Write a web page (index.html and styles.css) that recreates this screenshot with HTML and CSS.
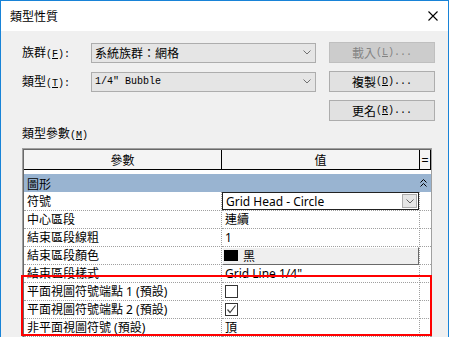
FILE: index.html
```html
<!DOCTYPE html>
<html lang="zh-Hant">
<head>
<meta charset="utf-8">
<title>類型性質</title>
<link rel="stylesheet" href="styles.css">
</head>
<body>
<div class="window">
  <div class="titlebar">
    <span class="title">類型性質</span>
    <svg class="close" width="10" height="10" viewBox="0 0 10 10"><path d="M0.5 0.5 L9.5 9.5 M9.5 0.5 L0.5 9.5" stroke="#000" stroke-width="1.1" fill="none"/></svg>
  </div>
  <div class="content">
    <div class="form">
      <div class="lbl">族群<span class="m">(<u>F</u>):</span></div>
      <div class="combo"><span>系統族群：網格</span><svg class="chev" width="8" height="5" viewBox="0 0 8 5"><path d="M0.5 0.5 L4 4 L7.5 0.5" stroke="#707070" fill="none"/></svg></div>
      <div class="btn disabled">載入<span class="m">(<u>L</u>)...</span></div>

      <div class="lbl">類型<span class="m">(<u>T</u>):</span></div>
      <div class="combo"><span class="m">1/4" Bubble</span><svg class="chev" width="8" height="5" viewBox="0 0 8 5"><path d="M0.5 0.5 L4 4 L7.5 0.5" stroke="#707070" fill="none"/></svg></div>
      <div class="btn">複製<span class="m">(<u>D</u>)...</span></div>

      <div class="btn col3">更名<span class="m">(<u>R</u>)...</span></div>
    </div>

    <div class="section">類型參數<span class="m">(<u>M</u>)</span></div>

    <div class="table">
      <div class="inner">
        <div class="hdr">
          <div>參數</div>
          <div>值</div>
          <div class="eq">=</div>
        </div>
        <div class="gap"></div>
        <div class="group">
          <span>圖形</span>
          <svg width="7" height="8" viewBox="0 0 7 8"><path d="M0.5 3.5 L3.5 0.5 L6.5 3.5 M0.5 7.5 L3.5 4.5 L6.5 7.5" stroke="#000" fill="none"/></svg>
        </div>
        <div class="row">
          <div class="k">符號</div>
          <div class="v dd">
            <div class="ddbox"><span>Grid Head - Circle</span><span class="ddbtn"><svg width="8" height="5" viewBox="0 0 8 5"><path d="M0.5 0.5 L4 4 L7.5 0.5" stroke="#606060" fill="none"/></svg></span></div>
          </div>
          <div></div>
        </div>
        <div class="row">
          <div class="k">中心區段</div>
          <div class="v">連續</div>
          <div></div>
        </div>
        <div class="row">
          <div class="k">結束區段線粗</div>
          <div class="v">1</div>
          <div></div>
        </div>
        <div class="row">
          <div class="k">結束區段顏色</div>
          <div class="v colorcell">
            <div class="colorbtn"><span class="swatch"></span><span>黑</span></div>
          </div>
          <div></div>
        </div>
        <div class="row">
          <div class="k">結束區段樣式</div>
          <div class="v">Grid Line 1/4"</div>
          <div></div>
        </div>
        <div class="row">
          <div class="k">平面視圖符號端點 1 (預設)</div>
          <div class="v"><span class="cb"></span></div>
          <div></div>
        </div>
        <div class="row">
          <div class="k">平面視圖符號端點 2 (預設)</div>
          <div class="v"><span class="cb"><svg width="11" height="11" viewBox="0 0 11 11"><path d="M1.5 5.5 L4 8.5 L9.5 1.5" stroke="#444" stroke-width="1.2" fill="none"/></svg></span></div>
          <div></div>
        </div>
        <div class="row">
          <div class="k">非平面視圖符號 (預設)</div>
          <div class="v">頂</div>
          <div></div>
        </div>
        <div class="row">
          <div class="k"></div>
          <div class="v"></div>
          <div></div>
        </div>
      </div>
    </div>
  </div>
  <div class="annot"></div>
</div>
</body>
</html>
```

FILE: styles.css
```css
html, body {
  margin: 0;
  padding: 0;
  background: #f0f0f0;
}

.window {
  position: relative;
  width: 449px;
  height: 337px;
  box-sizing: border-box;
  border: 1px solid #1883d7;
  border-bottom: 0;
  background: #f0f0f0;
  overflow: hidden;
  font-family: "Noto Sans CJK TC", sans-serif;
  font-size: 12px;
  color: #000;
}

.titlebar {
  height: 30px;
  background: #fff;
  display: flex;
  align-items: center;
  justify-content: space-between;
  padding: 0 10px 0 9px;
}

.title {
  font-family: "Noto Sans CJK TC", sans-serif;
  font-size: 12px;
  line-height: 16px;
}

.close {
  display: block;
}

.content {
  padding: 11px 0 0 21px;
}

.m {
  font-family: "Liberation Mono", monospace;
  font-size: 10px;
}

.form {
  display: grid;
  grid-template-columns: 69px 238px 106px;
  grid-auto-rows: 21px;
  row-gap: 8px;
  align-items: center;
}

.lbl {
  line-height: 21px;
  white-space: nowrap;
}

.combo {
  width: 225px;
  height: 20px;
  box-sizing: border-box;
  border: 1px solid #adadad;
  background: #e5e5e5;
  display: flex;
  align-items: center;
  justify-content: space-between;
  padding: 0 4px 0 3px;
  white-space: nowrap;
}

.chev {
  display: block;
}

.btn {
  width: 106px;
  height: 21px;
  box-sizing: border-box;
  border: 1px solid #adadad;
  background: #e1e1e1;
  display: flex;
  align-items: center;
  justify-content: center;
  white-space: nowrap;
}

.btn.disabled {
  background: #cccccc;
  border-color: #bfbfbf;
  color: #838383;
}

.col3 {
  grid-column: 3;
}

.section {
  margin-top: 3px;
  line-height: 18px;
}

.table {
  margin-top: 3px;
  width: 410px;
  height: 220px;
  box-sizing: border-box;
  border: 1px solid #a0a0a0;
  border-bottom: 0;
  background: #fff;
}

.inner {
  height: 100%;
  border-top: 1px solid #696969;
  border-left: 1px solid #696969;
  background: #fff;
}

.hdr {
  display: grid;
  grid-template-columns: 198px 198px 1fr;
  height: 20px;
  box-sizing: border-box;
  border-bottom: 1px solid #000;
  background: #f4f4f4;
}

.hdr > div {
  border-right: 1px solid #000;
  display: flex;
  align-items: center;
  justify-content: center;
}

.hdr .eq {
  font-family: "Liberation Sans", sans-serif;
  font-size: 12px;
}

.gap {
  height: 4px;
}

.group {
  height: 18px;
  background: #99b4d1;
  display: flex;
  align-items: center;
  justify-content: space-between;
  padding: 0 4px 0 3px;
}

.group svg {
  display: block;
}

.row {
  display: grid;
  grid-template-columns: 198px 198px 1fr;
  height: 18px;
  font-family: "Noto Sans", "Noto Sans CJK TC", sans-serif;
}

.row > div {
  box-sizing: border-box;
  border-bottom: 1px dotted #a0a0a0;
  border-right: 1px dotted #a0a0a0;
  display: flex;
  align-items: center;
  white-space: nowrap;
}

.row > div:last-child {
  border-right: 0;
}

.k {
  padding-left: 3px;
}

.v {
  padding-left: 3px;
}

.v.dd {
  padding-left: 0;
}

.ddbox {
  flex: 1;
  height: 18px;
  box-sizing: border-box;
  border: 1px solid #222;
  display: flex;
  align-items: center;
  justify-content: space-between;
  padding: 0 1px 0 3px;
  background: #fff;
}

.ddbtn {
  width: 15px;
  height: 14px;
  box-sizing: border-box;
  border: 1px solid #acacac;
  background: #e5e5e5;
  display: flex;
  align-items: center;
  justify-content: center;
}

.v.colorcell {
  padding-left: 0;
  border-bottom: 0;
}

.colorbtn {
  flex: 1;
  height: 18px;
  box-sizing: border-box;
  border: 1px solid;
  border-color: #fff #696969 #696969 #fff;
  background: #efefef;
  display: flex;
  align-items: center;
  gap: 5px;
  padding-left: 1px;
}

.swatch {
  width: 14px;
  height: 11px;
  background: #000;
}

.cb {
  width: 13px;
  height: 13px;
  box-sizing: border-box;
  border: 1px solid #333;
  background: #fff;
  display: flex;
  align-items: center;
  justify-content: center;
}

.cb svg {
  display: block;
}

.annot {
  position: absolute;
  left: 20px;
  top: 274px;
  width: 411px;
  height: 61px;
  box-sizing: border-box;
  border: 2px solid #ff0000;
  pointer-events: none;
}
```
